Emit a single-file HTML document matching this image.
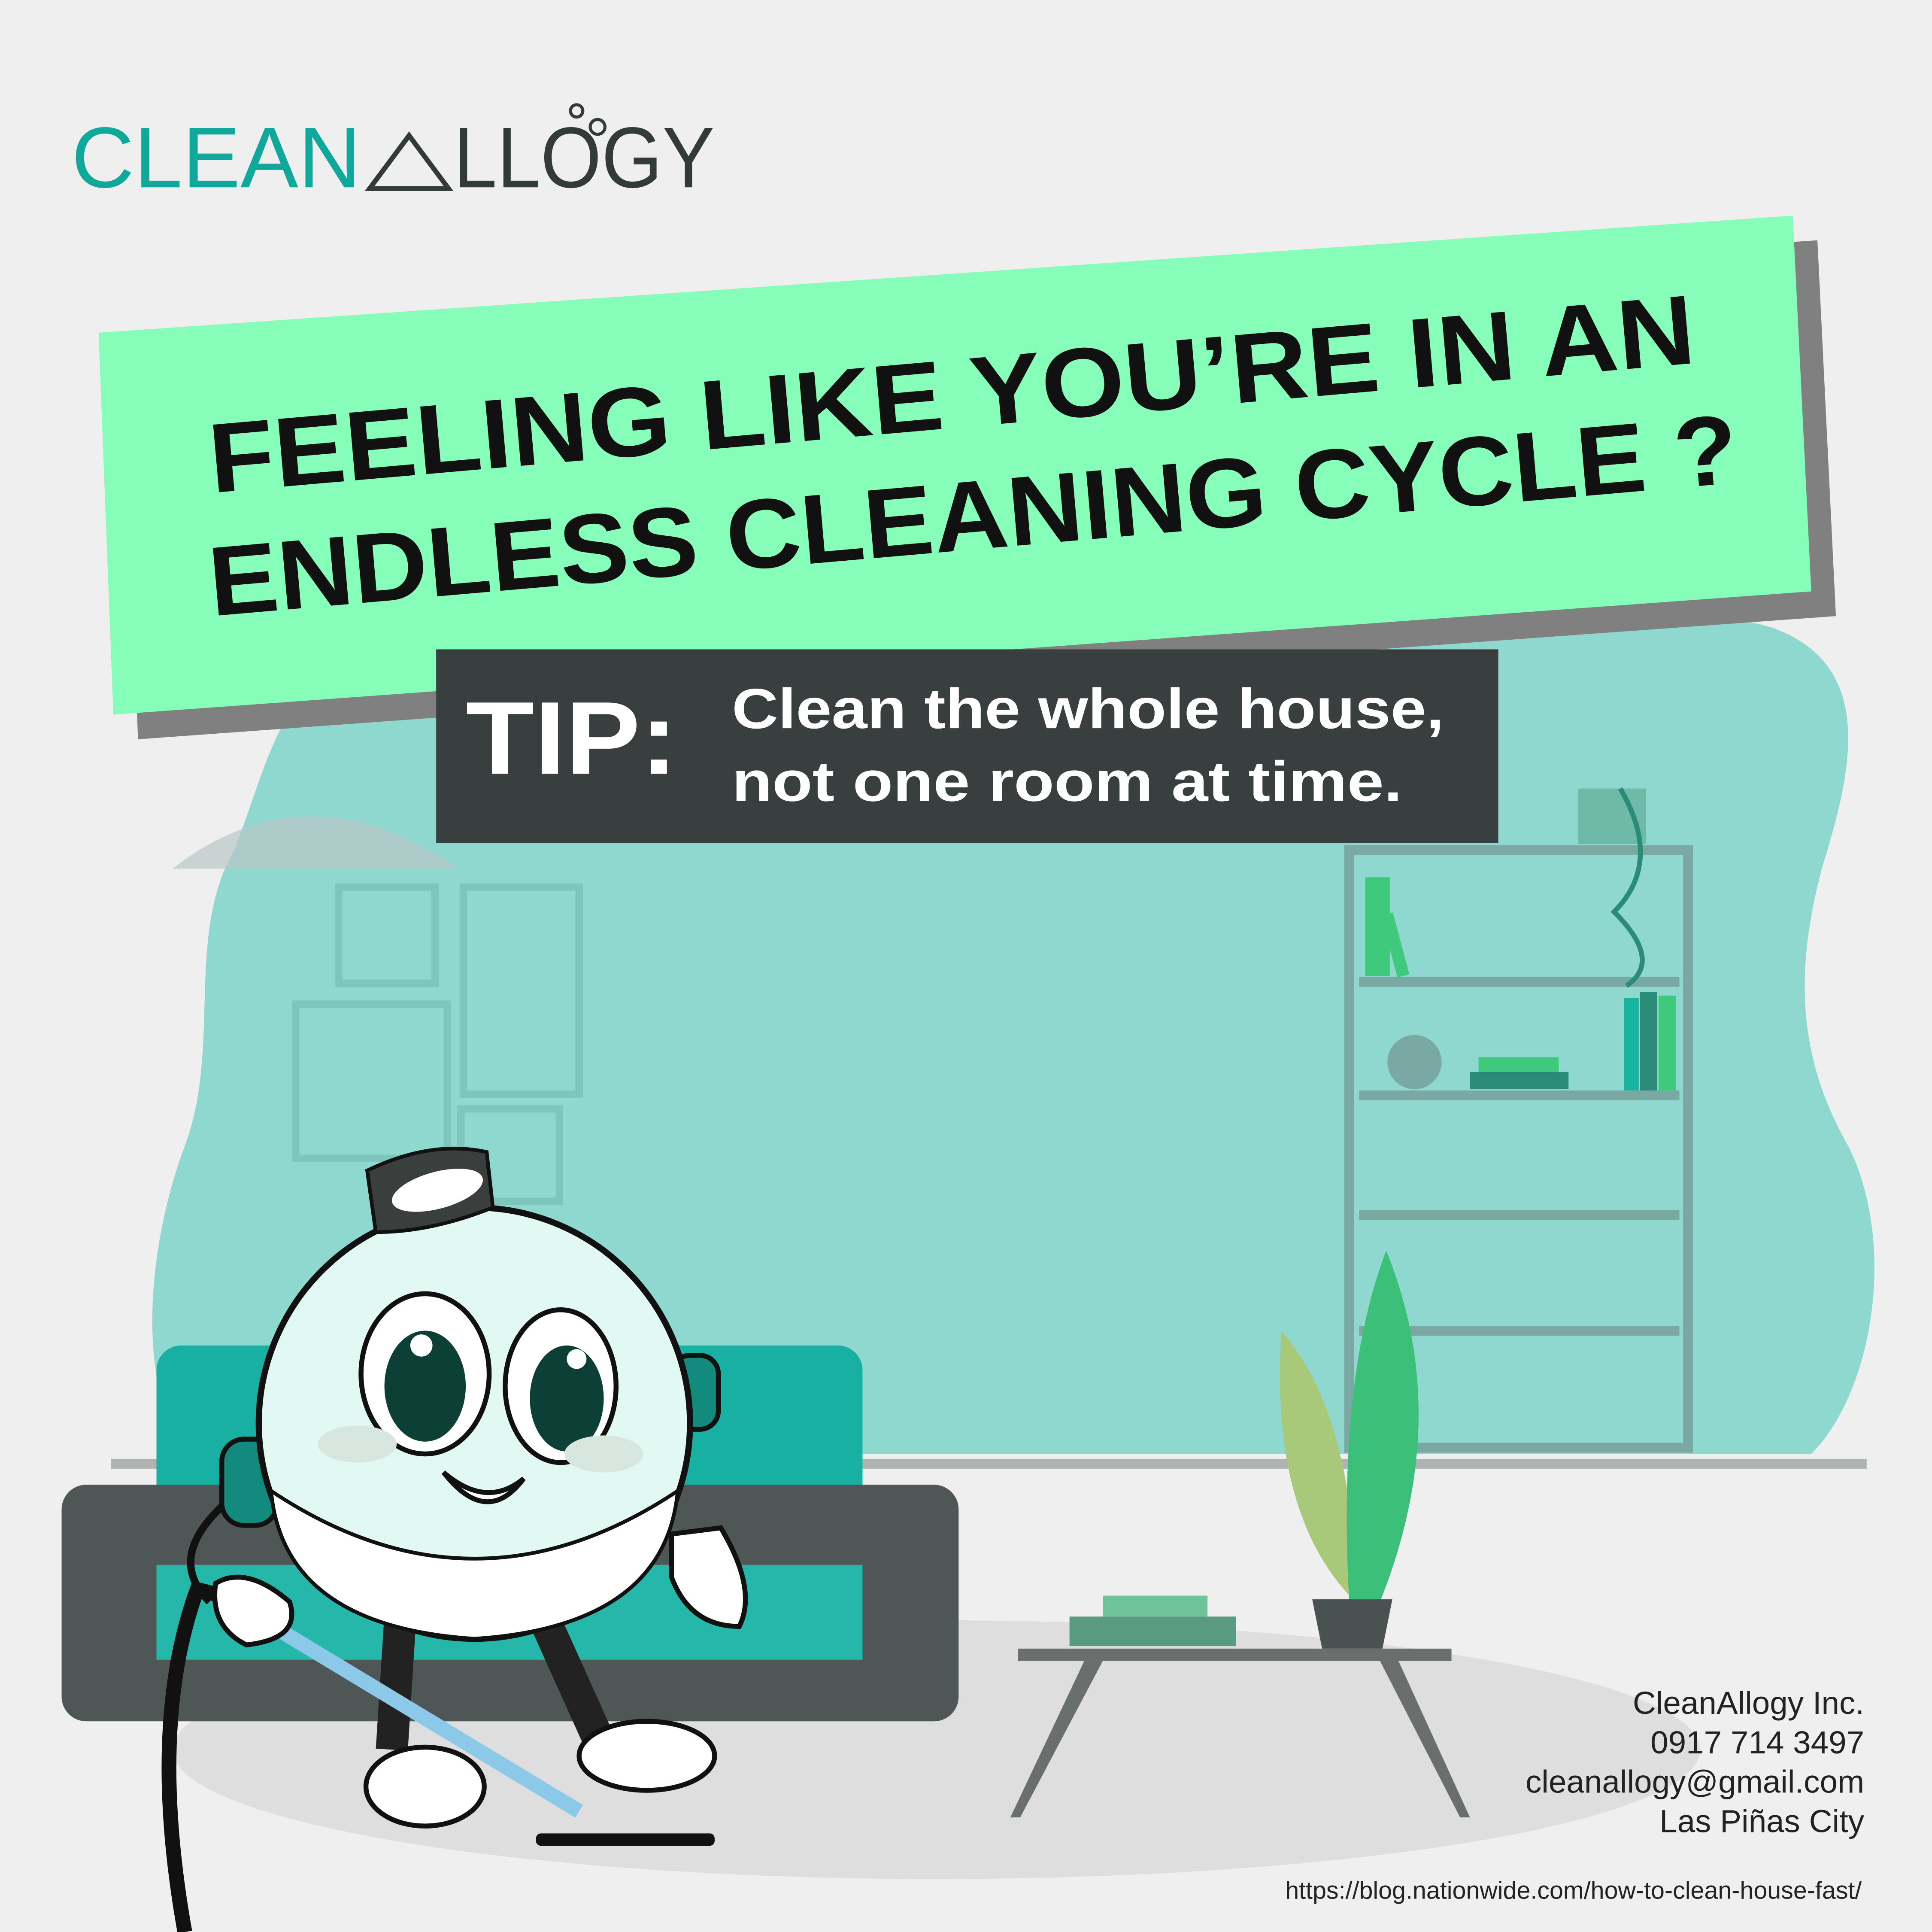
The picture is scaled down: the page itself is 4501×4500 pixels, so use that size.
<!DOCTYPE html>
<html><head><meta charset="utf-8"><style>
html,body{margin:0;padding:0;background:#efefef;}
svg{display:block;}
</style></head><body>
<svg width="4501" height="4500" viewBox="0 0 1568 1568" preserveAspectRatio="none" xmlns="http://www.w3.org/2000/svg" font-family="Liberation Sans, sans-serif">
<rect width="1568" height="1568" fill="#efefef"/>
<path d="M250 560 C300 520 500 500 800 505 C1100 505 1350 480 1440 510 C1520 540 1505 620 1480 700 C1455 790 1460 860 1500 930 C1540 1010 1520 1130 1470 1180 L150 1180 C110 1120 120 1010 150 930 C180 850 150 760 190 690 C210 640 220 590 250 560 Z" fill="#8fd8cf"/>
<ellipse cx="760" cy="1420" rx="620" ry="105" fill="#dedede"/>
<rect x="90" y="1184" width="1425" height="8" fill="#b0b3b3"/>
<g fill="none" stroke="#7dc6bd" stroke-width="6">
<rect x="275" y="720" width="78" height="78"/><rect x="376" y="720" width="94" height="168"/>
<rect x="240" y="815" width="123" height="125"/><rect x="374" y="900" width="80" height="75"/>
</g>
<path d="M140 705 Q250 620 372 705 Z" fill="#b9c8c6" opacity="0.7"/>
<g fill="none" stroke="#7aa9a3" stroke-width="8"><rect x="1095" y="690" width="275" height="485"/></g>
<g fill="#7aa9a3"><rect x="1103" y="793" width="260" height="8"/><rect x="1103" y="885" width="260" height="8"/><rect x="1103" y="982" width="260" height="8"/><rect x="1103" y="1076" width="260" height="8"/></g>
<rect x="1108" y="712" width="20" height="80" fill="#3fc97c"/><rect x="1134" y="740" width="10" height="52" fill="#3fc97c" transform="rotate(-15 1139 792)"/>
<circle cx="1148" cy="862" r="22" fill="#7aa9a3"/>
<rect x="1193" y="870" width="80" height="14" fill="#2a8c78"/><rect x="1200" y="858" width="65" height="12" fill="#3fc97c"/>
<rect x="1318" y="810" width="12" height="75" fill="#19b3a2"/><rect x="1331" y="805" width="14" height="80" fill="#2a8c78"/><rect x="1346" y="808" width="14" height="77" fill="#3fc97c"/>
<rect x="1281" y="640" width="55" height="45" fill="#6fb9a8"/>
<path d="M1315 640 Q1350 700 1310 740 Q1350 780 1320 800" fill="none" stroke="#2a8c78" stroke-width="4"/>
<rect x="127" y="1092" width="573" height="255" rx="20" fill="#18b0a2"/>
<rect x="50" y="1205" width="728" height="192" rx="20" fill="#4f5756"/>
<rect x="127" y="1262" width="573" height="85" fill="#25b8aa"/>
<rect x="127" y="1260" width="573" height="10" fill="#4f5756"/>
<path d="M1040 1080 Q1100 1150 1100 1300 Q1030 1230 1040 1080Z" fill="#a8c97a"/>
<path d="M1125 1015 Q1180 1150 1120 1300 L1095 1300 Q1085 1120 1125 1015Z" fill="#3cbf78"/>
<path d="M1065 1298 L1130 1298 L1122 1338 L1073 1338Z" fill="#4a5251"/>
<rect x="868" y="1312" width="135" height="24" fill="#5a9a80"/><rect x="895" y="1295" width="85" height="17" fill="#6fc49a"/>
<rect x="826" y="1338" width="352" height="10" fill="#6a6e6d"/>
<path d="M880 1348 L820 1475 L828 1475 L895 1348Z M1120 1348 L1185 1475 L1193 1475 L1135 1348Z" fill="#6a6e6d"/>
<path d="M150 1568 Q120 1400 160 1290 L200 1300" fill="none" stroke="#111" stroke-width="12"/>
<path d="M170 1300 Q130 1260 195 1210" fill="none" stroke="#111" stroke-width="6"/>
<rect x="180" y="1168" width="45" height="70" rx="18" fill="#138a7e" stroke="#111" stroke-width="4"/>
<rect x="545" y="1100" width="38" height="60" rx="15" fill="#138a7e" stroke="#111" stroke-width="4"/>
<path d="M325 1310 L318 1420 M440 1310 L485 1410" stroke="#222" stroke-width="26"/>
<ellipse cx="345" cy="1450" rx="48" ry="32" fill="#fff" stroke="#111" stroke-width="4"/>
<ellipse cx="525" cy="1425" rx="55" ry="28" fill="#fff" stroke="#111" stroke-width="4"/>
<line x1="230" y1="1325" x2="470" y2="1470" stroke="#8cc8e8" stroke-width="12"/>
<rect x="435" y="1488" width="145" height="10" rx="4" fill="#111"/>
<circle cx="385" cy="1155" r="175" fill="#e2f9f3" stroke="#111" stroke-width="5"/>
<path d="M220 1210 Q385 1320 550 1210 Q540 1320 385 1330 Q230 1320 220 1210Z" fill="#fff" stroke="#111" stroke-width="3"/>
<ellipse cx="345" cy="1115" rx="52" ry="65" fill="#fff" stroke="#111" stroke-width="4"/>
<ellipse cx="455" cy="1125" rx="45" ry="62" fill="#fff" stroke="#111" stroke-width="4"/>
<ellipse cx="345" cy="1125" rx="33" ry="45" fill="#0c3f35"/><ellipse cx="460" cy="1135" rx="30" ry="43" fill="#0c3f35"/>
<circle cx="342" cy="1092" r="9" fill="#fff"/><circle cx="468" cy="1103" r="8" fill="#fff"/>
<ellipse cx="290" cy="1172" rx="32" ry="15" fill="#d8e6e0"/><ellipse cx="490" cy="1180" rx="32" ry="15" fill="#d8e6e0"/>
<path d="M360 1195 Q395 1225 425 1200 Q395 1240 360 1195Z" fill="#fff" stroke="#111" stroke-width="4"/>
<path d="M298 950 Q350 925 395 935 L400 980 Q350 1000 305 1000Z" fill="#3a3f3e" stroke="#111" stroke-width="3"/>
<ellipse cx="355" cy="966" rx="38" ry="15" fill="#fff" transform="rotate(-15 355 966)"/>
<path d="M175 1285 Q200 1270 235 1300 Q245 1330 200 1335 Q170 1320 175 1285Z" fill="#fff" stroke="#111" stroke-width="4"/>
<path d="M545 1245 L585 1240 Q615 1290 600 1320 Q560 1320 545 1280Z" fill="#fff" stroke="#111" stroke-width="4"/>
<path d="M100 290 L1475 195 L1490 500 L112 600Z" fill="#7f807f"/>
<path d="M80 270 L1455 175 L1470 480 L92 580Z" fill="#86fdb8"/>
<g font-weight="bold" fill="#111" font-size="80">
<text transform="translate(172 400) rotate(-5)" x="0" y="0" textLength="1210" lengthAdjust="spacingAndGlyphs">FEELING LIKE YOU’RE IN AN</text>
<text transform="translate(172 500) rotate(-5)" x="0" y="0" textLength="1245" lengthAdjust="spacingAndGlyphs">ENDLESS CLEANING CYCLE ?</text>
</g>
<rect x="354" y="527" width="862" height="157" fill="#383f3e"/>
<text x="378" y="628" fill="#fff" font-weight="bold" font-size="84" textLength="172" lengthAdjust="spacingAndGlyphs">TIP:</text>
<text x="594" y="591" fill="#fff" font-weight="bold" font-size="46" textLength="578" lengthAdjust="spacingAndGlyphs">Clean the whole house,</text>
<text x="594" y="650" fill="#fff" font-weight="bold" font-size="46" textLength="544" lengthAdjust="spacingAndGlyphs">not one room at time.</text>
<text x="58" y="152" fill="#10a89a" font-size="70" textLength="235" lengthAdjust="spacingAndGlyphs">CLEAN</text>
<path d="M300 153 L332 110 L364 153Z" fill="none" stroke="#333b3a" stroke-width="4"/>
<text x="368" y="152" fill="#333b3a" font-size="70" textLength="212" lengthAdjust="spacingAndGlyphs">LLOGY</text>
<circle cx="468" cy="90" r="5" fill="none" stroke="#333b3a" stroke-width="2.5"/><circle cx="485" cy="103" r="6" fill="none" stroke="#333b3a" stroke-width="2.5"/>
<g fill="#222" font-size="26" text-anchor="end">
<text x="1513" y="1391">CleanAllogy Inc.</text>
<text x="1513" y="1423">0917 714 3497</text>
<text x="1513" y="1455">cleanallogy@gmail.com</text>
<text x="1513" y="1487">Las Piñas City</text>
<text x="1511" y="1541" font-size="20">https://blog.nationwide.com/how-to-clean-house-fast/</text>
</g>
</svg>
</body></html>
